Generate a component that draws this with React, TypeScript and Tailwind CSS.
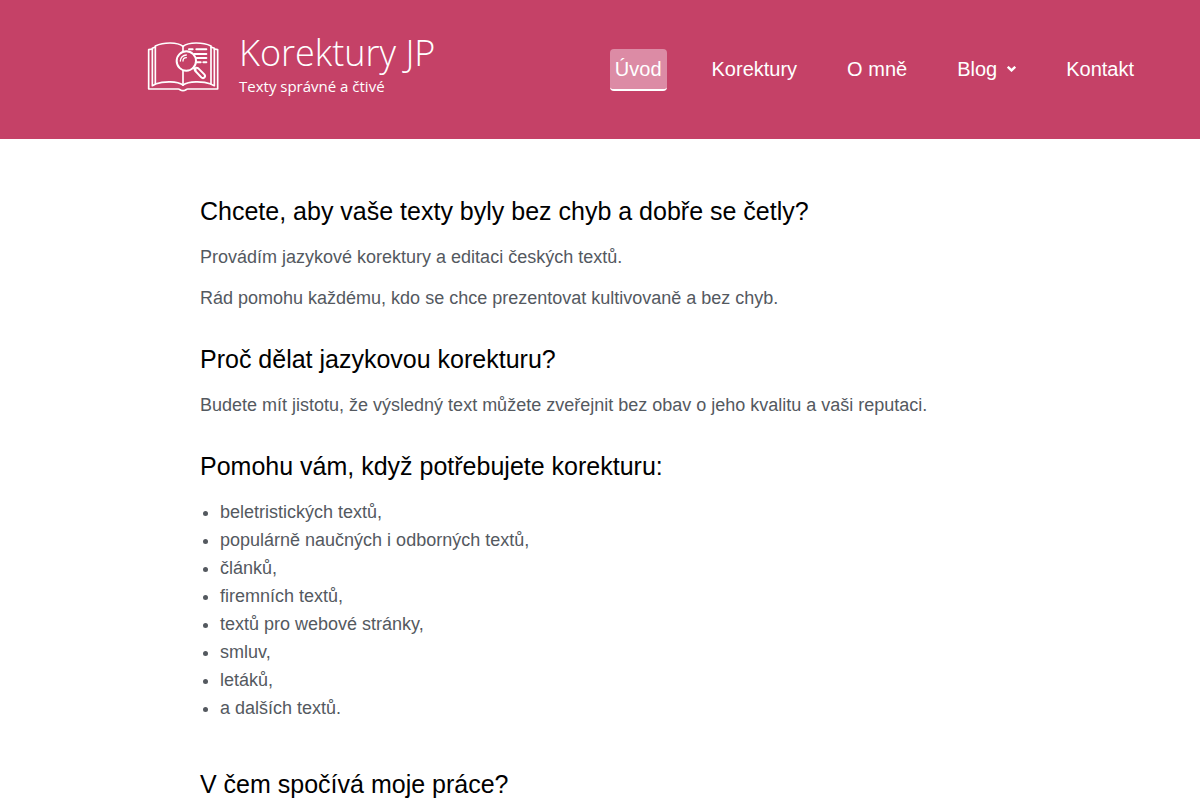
import type { ReactNode } from "react";

const navLinks = [
  { label: "Úvod", href: "#uvod", active: true },
  { label: "Korektury", href: "#korektury" },
  { label: "O mně", href: "#o-mne" },
  { label: "Blog", href: "#blog", hasMenu: true },
  { label: "Kontakt", href: "#kontakt" },
];

const textTypes = [
  "beletristických textů,",
  "populárně naučných i odborných textů,",
  "článků,",
  "firemních textů,",
  "textů pro webové stránky,",
  "smluv,",
  "letáků,",
  "a dalších textů.",
];

function BookIcon() {
  return (
    <svg
      viewBox="21 31 216 156"
      className="h-[52px] w-[72px] shrink-0"
      fill="none"
      stroke="currentColor"
      strokeWidth="5"
      strokeLinecap="round"
      strokeLinejoin="round"
      aria-hidden="true"
    >
      <path d="M129 50C112 37 72 37 46 49V163C72 154 112 154 129 166" />
      <path d="M129 50C146 37 188 37 213 49V163C188 154 146 154 129 166" />
      <path d="M129 50V166" />
      <path d="M46 52L37 56V168L46 164M213 52L223 56V168L213 164" />
      <path d="M37 58L26 60V178H115C120 178 121 183 129 183S138 178 143 178H233V60L223 58" />
      <path d="M147 59H158M169 59H199M163 73H199M170 85H199M170 98H182M190 98H199" strokeWidth="6" />
      <circle cx="139" cy="94" r="29" strokeWidth="6" className="fill-[#c54167]" />
      <path d="M121 94C121 84 129 76 139 76M129 94C129 88 133 84 139 84" strokeWidth="4" />
      <path d="M160 114L167 121" strokeWidth="6" />
      <path d="M166 124L184 143C190 149 199 141 193 134L175 116C168 111 161 118 166 124Z" strokeWidth="6" />
    </svg>
  );
}

function Logo() {
  return (
    <a href="#uvod" className="flex items-center gap-5 font-['Open_Sans',sans-serif] text-white">
      <BookIcon />
      <span className="flex flex-col">
        <span className="text-[36px] leading-[40px] font-light whitespace-nowrap">Korektury JP</span>
        <span className="text-[15px] leading-[26px] whitespace-nowrap">Texty správné a čtivé</span>
      </span>
    </a>
  );
}

function SiteHeader() {
  return (
    <header className="flex flex-wrap items-center justify-between gap-6 bg-[#c54167] pt-[33px] pr-[61px] pb-10 pl-[147px]">
      <Logo />
      <nav className="mt-2 flex gap-10 text-xl leading-10 text-white">
        {navLinks.map((link) => (
          <a
            key={link.label}
            href={link.href}
            aria-current={link.active ? "page" : undefined}
            className={
              link.active
                ? "rounded-[4px] border-b-2 border-white bg-[#dc8ba5] px-[5px]"
                : "flex items-center border-b-2 border-transparent px-[5px]"
            }
          >
            {link.label}
            {link.hasMenu ? (
              <svg
                viewBox="0 0 9 6"
                className="ml-[10px] h-[6px] w-[9px]"
                fill="none"
                stroke="currentColor"
                strokeWidth="2.4"
                aria-hidden="true"
              >
                <path d="M0.8 0.8L4.5 4.4L8.2 0.8" />
              </svg>
            ) : null}
          </a>
        ))}
      </nav>
    </header>
  );
}

function Heading({ children }: { children: ReactNode }) {
  return <h2 className="text-[25px] leading-[30px] text-black">{children}</h2>;
}

export default function App() {
  return (
    <div className="min-h-screen bg-white font-['Liberation_Sans',Arial,sans-serif]">
      <SiteHeader />
      <main className="mx-auto flex max-w-[800px] flex-col gap-8 pt-[57px] text-lg leading-7 text-[#54595f]">
        <section>
          <Heading>Chcete, aby vaše texty byly bez chyb a dobře se četly?</Heading>
          <p className="mt-[17px] mb-[13px]">Provádím jazykové korektury a editaci českých textů.</p>
          <p>Rád pomohu každému, kdo se chce prezentovat kultivovaně a bez chyb.</p>
        </section>
        <section>
          <Heading>Proč dělat jazykovou korekturu?</Heading>
          <p className="mt-[17px]">
            Budete mít jistotu, že výsledný text můžete zveřejnit bez obav o jeho kvalitu a vaši reputaci.
          </p>
        </section>
        <section>
          <Heading>Pomohu vám, když potřebujete korekturu:</Heading>
          <ul className="mt-[17px] list-disc pb-[15px] pl-5">
            {textTypes.map((item) => (
              <li key={item}>{item}</li>
            ))}
          </ul>
        </section>
        <section>
          <Heading>V čem spočívá moje práce?</Heading>
        </section>
      </main>
    </div>
  );
}
